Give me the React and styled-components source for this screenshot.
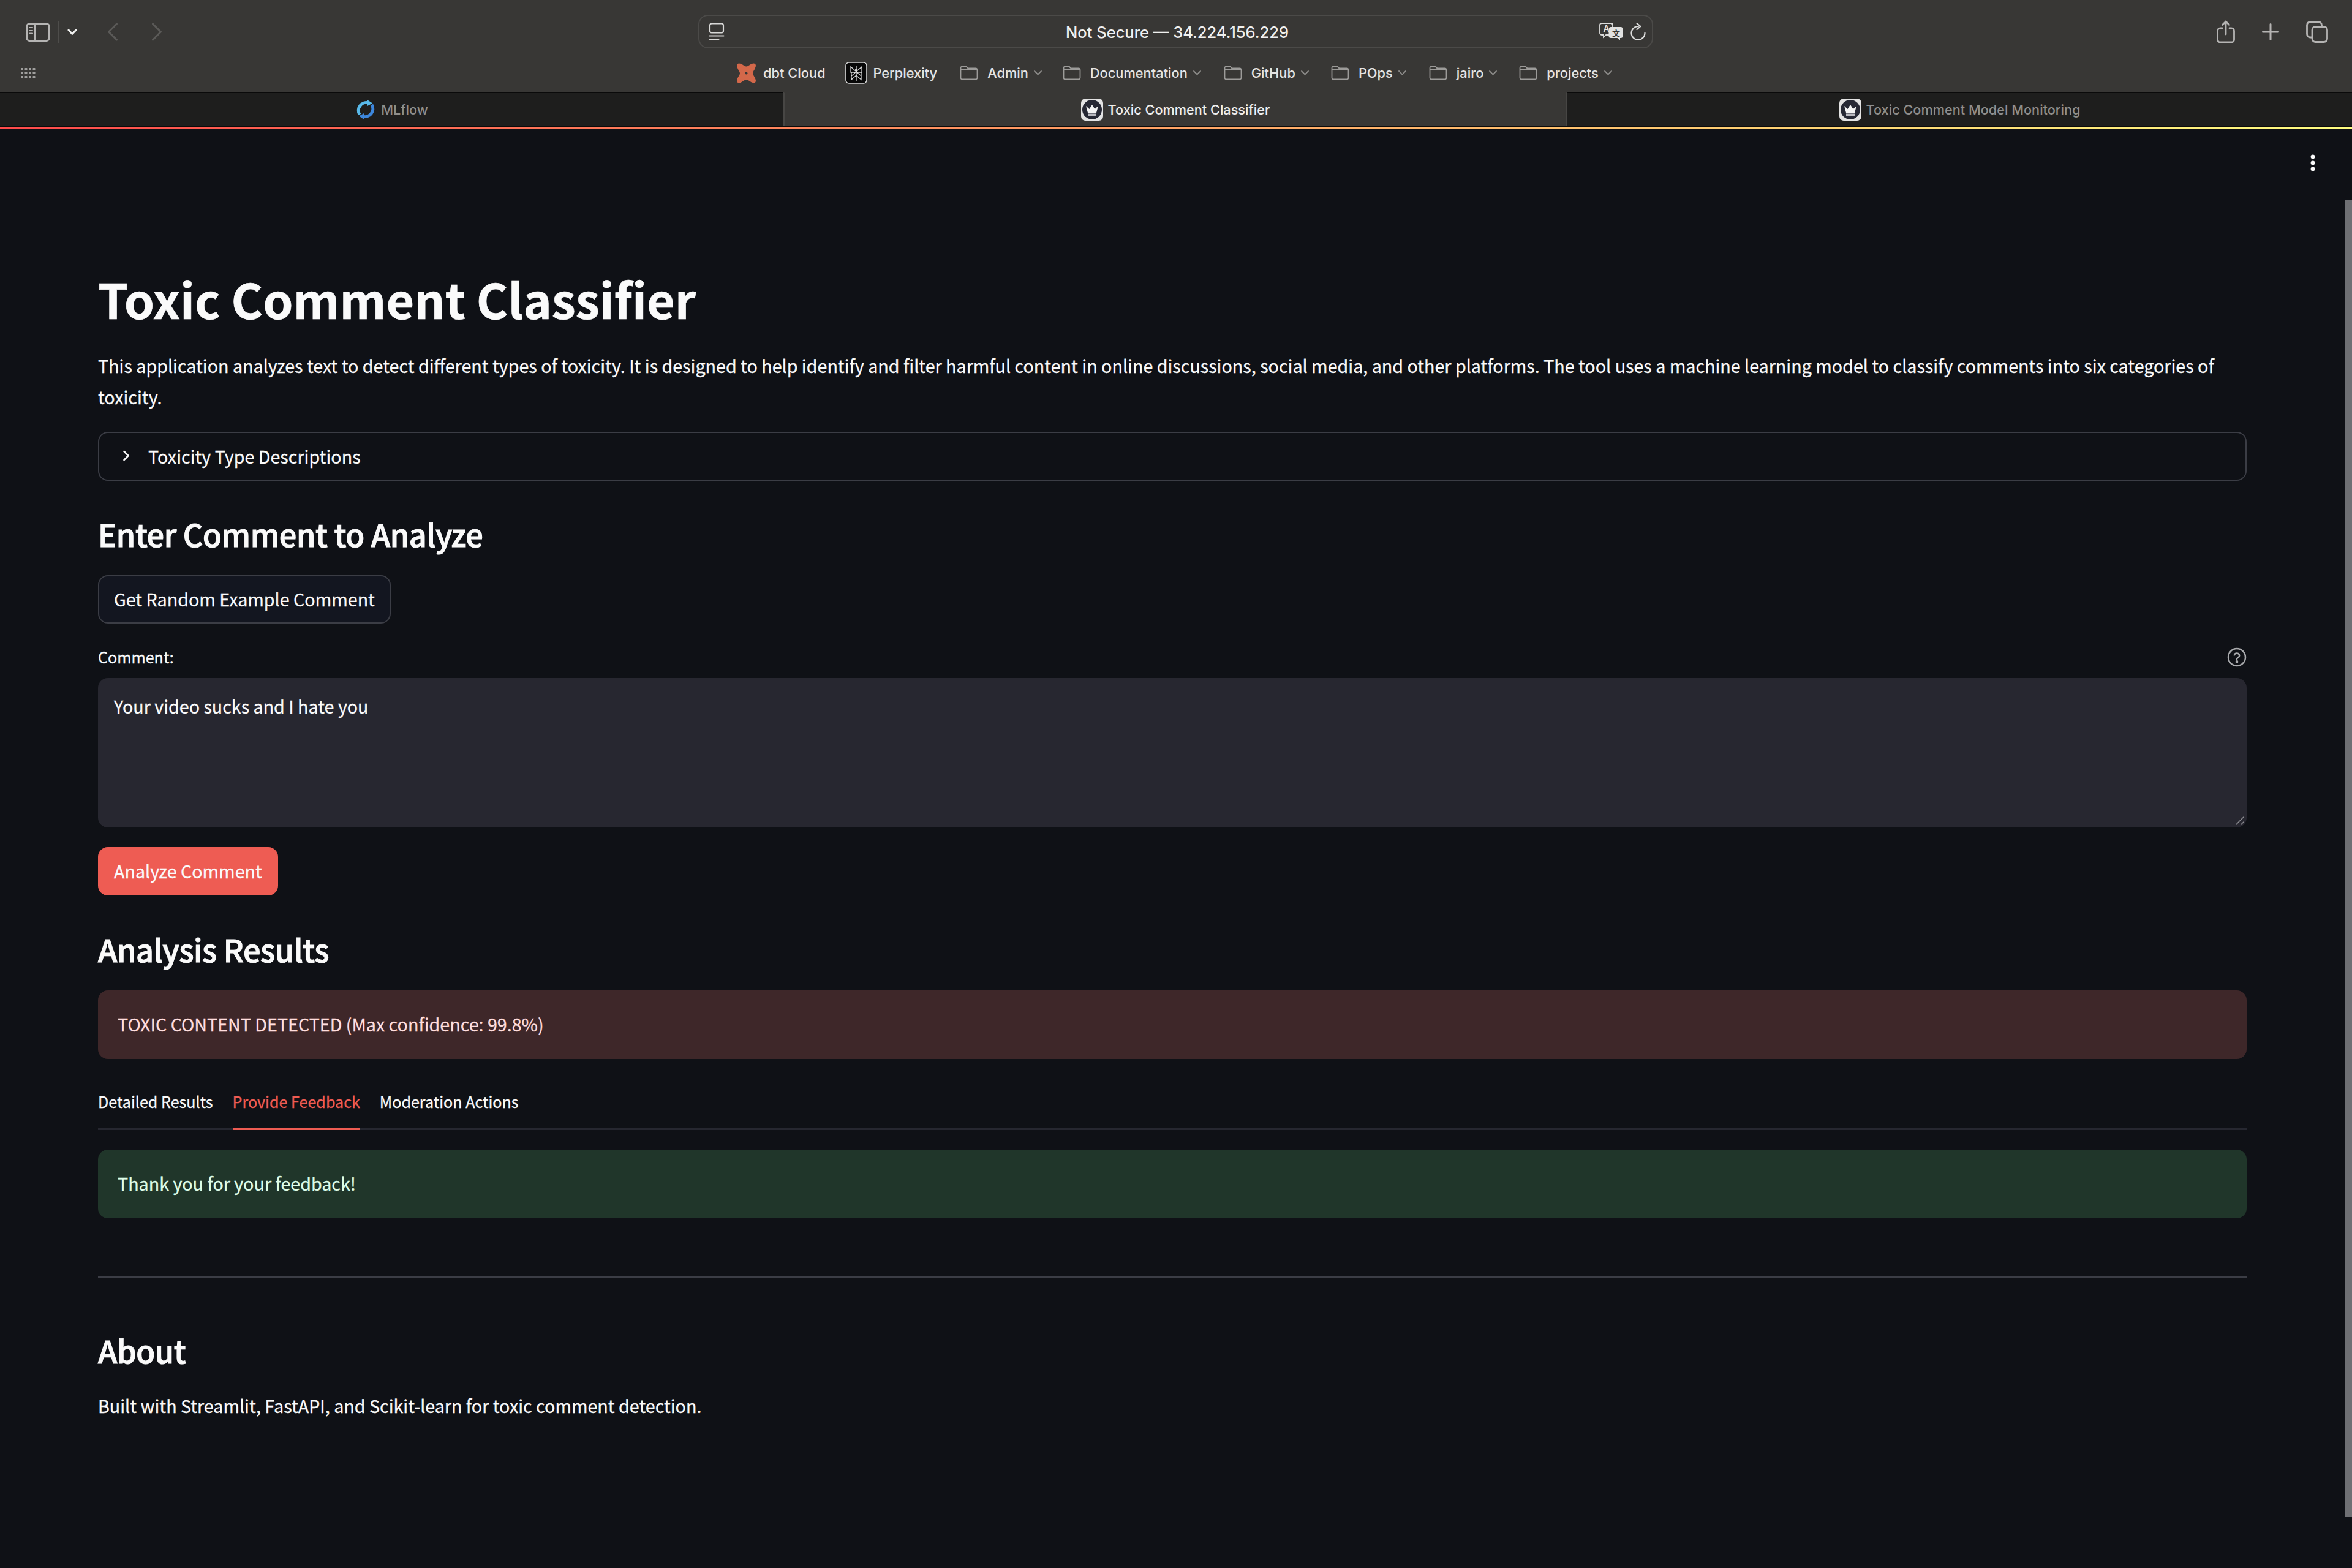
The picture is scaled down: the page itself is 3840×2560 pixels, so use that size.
import React from "react";
import styled, { createGlobalStyle } from "styled-components";

const Global = createGlobalStyle`
  html, body { margin: 0; padding: 0; background: #0f1116; }
  * { box-sizing: border-box; }
`;
const CHROME = `Inter, "Liberation Sans", sans-serif`;
const BODY = `"Noto Sans CJK SC", "Noto Sans", sans-serif`;

const Page = styled.div`
  width: 3840px; height: 2560px; display: flex; flex-direction: column;
  background: #0f1116; overflow: hidden;
`;
const Toolbar = styled.header`
  height: 150px; background: #383735; display: flex; flex-direction: column; flex: none;
`;
const TopRow = styled.div`
  height: 88px; padding-top: 24px; display: grid; grid-template-columns: 1140px 1559px 1fr;
`;
const NavGroup = styled.div`
  height: 56px; padding-left: 42px; display: flex; align-items: center;
`;
const ActionGroup = styled.div`
  height: 56px; padding-right: 39px; display: flex; align-items: center; justify-content: flex-end; gap: 44px;
`;
const VDivider = styled.span`
  width: 2px; height: 36px; background: #4e4d4b; margin: 0 13px 0 13px; flex: none;
`;
const NavSpacer = styled.span`
  width: ${p => p.$w}px; flex: none;
`;
const Address = styled.div`
  height: 55px; border: 2px solid #4b4a48; border-radius: 16px;
  display: grid; grid-template-columns: 1fr auto 1fr; align-items: center;
  padding: 0 10px 0 15px; color: #f0f0ef; font: 500 25.5px ${CHROME};
`;
const AddressLabel = styled.span`
  padding-top: 2px;
`;
const AddressEnd = styled.div`
  display: flex; align-items: center; gap: 12px; justify-content: flex-end;
`;
const BookmarkRow = styled.nav`
  height: 62px; display: flex; align-items: center; padding-left: 33px;
`;
const Bookmarks = styled.div`
  display: flex; align-items: center; margin-left: 1144px; font: 500 21.8px ${CHROME}; color: #e4e3e2;
`;
const Bookmark = styled.div`
  display: flex; align-items: center; gap: ${p => p.$gap}px; margin-right: ${p => p.$after}px; white-space: nowrap; height: 38px;
`;
const Tabs = styled.div`
  height: 56px; display: grid; grid-template-columns: 1279px 1280px 1fr; flex: none; background: #1e1e1d;
`;
const Tab = styled.div`
  display: flex; align-items: center; justify-content: center; gap: 8px;
  font: 500 21.7px ${CHROME}; white-space: nowrap;
  background: ${p => p.$active ? "#383735" : "#1e1e1d"};
  color: ${p => p.$active ? "#eeeeed" : "#8f8e8c"};
  border-top: 2px solid ${p => p.$active ? "#383735" : "#0a0a0a"};
  border-left: ${p => p.$active ? "2px solid #474644" : "none"};
  border-right: ${p => p.$active ? "2px solid #474644" : "none"};
`;
const Decoration = styled.div`
  height: 4px; flex: none; border-top: 1px solid #0b0b0b;
  background: linear-gradient(90deg, rgb(255,75,75), rgb(255,253,128));
`;
const Main = styled.main`
  flex: 1; padding: 229px 172px 0 160px; font-family: ${BODY}; color: #fafafa; position: relative;
  -webkit-text-stroke: 0.3px currentColor;
`;
const Kebab = styled.svg`
  position: absolute; left: 3770px; top: 40px; width: 12px; height: 32px; fill: #fafafa;
`;
const Scrollbar = styled.div`
  position: absolute; right: 0; top: 116px; width: 12px; height: 2150px; background: #6f7074;
`;
const Title = styled.h1`
  margin: 0; font-size: 78.8px; line-height: 96px; font-weight: 700; -webkit-text-stroke: 0.7px currentColor;
`;
const Paragraph = styled.p`
  margin: ${p => p.$top}px 0 0; font-size: 28.66px; line-height: 51.2px; font-weight: 400;
`;
const Expander = styled.div`
  margin-top: 32px; height: 80px; border: 2px solid #3b3d45; border-radius: 16px; padding-bottom: 2px;
  display: flex; align-items: center; padding-left: 38px; gap: 30px; font-size: 28.66px;
`;
const Subheader = styled.h3`
  margin: ${p => p.$top}px 0 0; font-size: 50.4px; line-height: 72px; font-weight: 500;
  letter-spacing: -0.4px; -webkit-text-stroke: 1.1px currentColor;
`;
const Button = styled.button`
  display: flex; align-items: center; height: 79px; padding: 0 24px 3px; margin-top: ${p => p.$top}px;
  font: 400 28.66px ${BODY}; color: #fafafa; border-radius: 16px; -webkit-text-stroke: 0.3px currentColor;
  background: ${p => p.$primary ? "#ee5c53" : "#131620"};
  border: 2px solid ${p => p.$primary ? "#ee5c53" : "#3b3d45"};
`;
const LabelRow = styled.div`
  margin-top: 33px; height: 40px; display: flex; align-items: center; justify-content: space-between;
  font-size: 25.1px; padding-top: 2px;
`;
const TextArea = styled.div`
  margin-top: 16px; height: 244px; background: #272730; border-radius: 16px; padding: 20px 26px;
  font-size: 28.66px; line-height: 51px; position: relative;
`;
const Alert = styled.div`
  margin-top: ${p => p.$top}px; height: 112px; border-radius: 16px; padding: 0 32px 4px; display: flex; align-items: center;
  font-size: 28.66px; background: ${p => p.$tone === "error" ? "#3e2729" : "#20362a"};
  color: ${p => p.$tone === "error" ? "#ffdede" : "#dffde9"};
`;
const TabBar = styled.div`
  margin-top: 50px; height: 66px; display: flex; gap: 32px; border-bottom: 4px solid #262730;
`;
const TabItem = styled.div`
  font-size: 25.1px; line-height: 38px; height: 66px;
  color: ${p => p.$active ? "#ee5c53" : "#fafafa"};
  border-bottom: 4px solid ${p => p.$active ? "#ee5c53" : "transparent"};
`;
const Divider = styled.hr`
  margin: 95px 0 0; height: 2px; border: 0; background: #3b3d45;
`;

const Icon = styled.svg`
  flex: none; color: ${p => p.$c || "#b5b4b3"}; fill: none; stroke: currentColor;
  stroke-linecap: round; stroke-linejoin: round; stroke-width: ${p => p.$sw || 3};
`;
const Filled = styled.svg`
  flex: none; display: block;
`;
const ResizeHandle = styled(Icon)`
  position: absolute; right: 3px; bottom: 3px;
`;
const HelpGlyph = styled(Icon)`
  margin-top: 2px;
`;
const BookmarkChevron = styled(Icon)`
  margin-left: -7px;
`;

const SidebarIcon = () => (
  <Icon width="40" height="31" viewBox="0 0 40 31">
    <rect x="1.500" y="1.500" width="37" height="28" rx="5" /><path d="M15 2v27" />
    <path d="M6 8h5M6 13h5M6 17.500h5" strokeWidth="2.200" />
  </Icon>
);
const NavChevron = ({ d }) => (
  <Icon $c="#5b5a58" width="18" height="30" viewBox="0 0 18 30"><path d={d} /></Icon>
);
const DropDown = () => (
  <Icon $c="#f0f0ef" width="16" height="11" viewBox="0 0 16 11"><path d="m2 2 6 6.500L14 2" /></Icon>
);
const PageIcon = () => (
  <Icon $c="#d8d8d7" $sw="2.200" width="26" height="30" viewBox="0 0 26 30">
    <rect x="2" y="1.500" width="22" height="15" rx="3" /><path d="M1.500 21.500h23M1.500 28h15" />
  </Icon>
);
const TranslateIcon = () => (
  <Filled width="39" height="29" viewBox="0 0 39 29">
    <path d="M4 1h15a3 3 0 0 1 3 3v13a3 3 0 0 1-3 3H11l-4 3.500V20H4a3 3 0 0 1-3-3V4a3 3 0 0 1 3-3Z" fill="none" stroke="#dcdcdb" strokeWidth="1.800" />
    <text x="6.500" y="15" fontSize="14" fontFamily="Inter, sans-serif" fontWeight="600" fill="#e4e4e3">A</text>
    <path d="M19 7h16a3.500 3.500 0 0 1 3.500 3.500v11A3.500 3.500 0 0 1 35 25h-1v3.500L29.500 25H19a3.500 3.500 0 0 1-3.500-3.500v-11A3.500 3.500 0 0 1 19 7Z" fill="#e2e2e1" />
    <text x="21" y="22" fontSize="13" fontFamily="Noto Sans CJK SC, sans-serif" fontWeight="700" fill="#383735">文</text>
  </Filled>
);
const ReloadIcon = () => (
  <Icon $c="#dcdcdb" $sw="2.200" width="25" height="29" viewBox="0 0 25 29">
    <path d="M13 6A11 11 0 1 0 23.500 16.500" /><path d="m10.500 1 6 5-6 5" />
  </Icon>
);
const ShareIcon = () => (
  <Icon $sw="2.800" width="30" height="38" viewBox="0 0 30 38">
    <path d="M9 13H6a4.500 4.500 0 0 0-4.500 4.500v14A4.500 4.500 0 0 0 6 36h18a4.500 4.500 0 0 0 4.500-4.500v-14A4.500 4.500 0 0 0 24 13h-3M15 2v21M9.500 7.500 15 2l5.500 5.500" />
  </Icon>
);
const PlusIcon = () => (
  <Icon width="28" height="28" viewBox="0 0 28 28"><path d="M14 1.500v25M1.500 14h25" /></Icon>
);
const TabsIcon = () => (
  <Icon $sw="2.800" width="36" height="36" viewBox="0 0 36 36">
    <path d="M9 27H7a5.500 5.500 0 0 1-5.500-5.500V7A5.500 5.500 0 0 1 7 1.500h13A5.500 5.500 0 0 1 25.500 7v2" />
    <rect x="10" y="9.500" width="24.500" height="25" rx="5.500" />
  </Icon>
);
const GridIcon = () => (
  <Filled width="25" height="18" viewBox="0 0 25 18" fill="#a09f9e">
    {[1, 7.500, 14].flatMap(y => [1, 7.500, 14, 20.500].map(x => <rect key={x + "-" + y} x={x} y={y} width="4" height="3.500" rx=".8" />))}
  </Filled>
);
const DbtIcon = () => (
  <Filled width="33" height="33" viewBox="0 0 33 33">
    <path fill="#d3684a" d="M2 1.500C4-.5 7 .5 9.500 2c2.500 1.500 5 3.500 7 3.500s4.500-2 7-3.500C26 .5 29-.5 31 1.500c2 2 .5 5-.5 7.500-1 2.500-3.500 5-3.500 7.500s2.500 5 3.500 7.500c1 2.500 2.500 5.500.5 7.500s-5 .5-7.500-1c-2.500-1.500-5-3.500-7-3.500s-4.500 2-7 3.500C7 32.500 4 33.500 2 31.500s-.5-5 .5-7.500c1-2.500 3.500-5 3.500-7.500S3.500 11.500 2.500 9 0 3.500 2 1.500Z" />
    <circle cx="16.500" cy="16.500" r="2" fill="#383735" />
  </Filled>
);
const PerplexityIcon = () => (
  <Filled width="36" height="36" viewBox="0 0 36 36">
    <rect x="1" y="1" width="34" height="34" rx="5" fill="#080808" stroke="#d8d8d8" strokeWidth="1.600" />
    <path d="M18 6v25M9 8l9 8 9-8v9H9V8ZM18 16l-8 7v6l8-7 8 7v-6l-8-7ZM10 17v6M26 17v6" fill="none" stroke="#d9d9d9" strokeWidth="1.300" />
    <circle cx="18" cy="13" r="2" fill="#d9d9d9" />
  </Filled>
);
const FolderIcon = () => (
  <Icon $c="#9c9b99" $sw="1.800" width="30" height="24" viewBox="0 0 30 24">
    <path d="M1.500 7V4A2.500 2.500 0 0 1 4 1.500h6.500l3 3H26A2.500 2.500 0 0 1 28.500 7v13a2.500 2.500 0 0 1-2.500 2.500H4A2.500 2.500 0 0 1 1.500 20V7h27" />
  </Icon>
);
const MiniChevron = () => (
  <BookmarkChevron $c="#8e8d8b" $sw="1.800" width="15" height="10" viewBox="0 0 15 10"><path d="m2 2 5.500 5.500L13 2" /></BookmarkChevron>
);
const MlflowIcon = () => (
  <Filled width="34" height="34" viewBox="0 0 34 34" fill="none">
    <path d="M22 6A13 13 0 0 0 7 25" stroke="#58b9e9" strokeWidth="5" />
    <path d="M12 28A13 13 0 0 0 27 9" stroke="#3d87dc" strokeWidth="5" />
    <path d="M19 .500l9 6-9 5Z" fill="#58b9e9" />
    <path d="M15 33.500l-9-6 9-5Z" fill="#3d87dc" />
  </Filled>
);
const CrownIcon = () => (
  <Filled width="36" height="36" viewBox="0 0 36 36">
    <rect width="36" height="36" rx="7" fill="#e3e3e3" />
    <circle cx="18" cy="18" r="16" fill="#262834" />
    <path d="M8 12l5.500 5 4.500-7 4.500 7 5.500-5-3 11H11Z" fill="#f4f4f4" />
    <rect x="11" y="24.500" width="14" height="3.500" fill="#b9b9bf" />
  </Filled>
);
const ExpandChevron = () => (
  <Icon $c="#fafafa" $sw="2.600" width="12" height="18" viewBox="0 0 12 18"><path d="m2.500 2 7 7-7 7" /></Icon>
);
const HelpIcon = () => (
  <HelpGlyph $c="#a9aaad" $sw="2.500" width="32" height="32" viewBox="0 0 32 32">
    <circle cx="16" cy="16" r="14" />
    <path d="M11.800 12.500a4.300 4.300 0 0 1 8.400 1c0 2.800-4.200 3.300-4.200 5.500" />
    <circle cx="16" cy="23.500" r="1.200" fill="currentColor" />
  </HelpGlyph>
);

const folders = [
  ["Admin", 33], ["Documentation", 36], ["GitHub", 35], ["POps", 36], ["jairo", 35], ["projects", 0],
];

export default function App() {
  return (
    <Page>
      <Global />
      <Toolbar>
        <TopRow>
          <NavGroup>
            <SidebarIcon />
            <VDivider />
            <DropDown />
            <NavSpacer $w={49} />
            <NavChevron d="M15.500 2 2.500 15l13 13" />
            <NavSpacer $w={54} />
            <NavChevron d="M2.500 2l13 13-13 13" />
          </NavGroup>
          <Address>
            <PageIcon />
            <AddressLabel>Not Secure — 34.224.156.229</AddressLabel>
            <AddressEnd><TranslateIcon /><ReloadIcon /></AddressEnd>
          </Address>
          <ActionGroup><ShareIcon /><PlusIcon /><TabsIcon /></ActionGroup>
        </TopRow>
        <BookmarkRow>
          <GridIcon />
          <Bookmarks>
            <Bookmark $gap={11} $after={33}><DbtIcon /><span>dbt Cloud</span></Bookmark>
            <Bookmark $gap={9} $after={37}><PerplexityIcon /><span>Perplexity</span></Bookmark>
            {folders.map(([name, after]) => (
              <Bookmark key={name} $gap={15} $after={after}>
                <FolderIcon /><span>{name}</span><MiniChevron />
              </Bookmark>
            ))}
          </Bookmarks>
        </BookmarkRow>
      </Toolbar>
      <Tabs>
        <Tab><MlflowIcon />MLflow</Tab>
        <Tab $active><CrownIcon />Toxic Comment Classifier</Tab>
        <Tab><CrownIcon />Toxic Comment Model Monitoring</Tab>
      </Tabs>
      <Decoration />
      <Main>
        <Kebab viewBox="0 0 12 32">
          <circle cx="6" cy="6" r="3.400" /><circle cx="6" cy="16" r="3.400" /><circle cx="6" cy="26" r="3.400" />
        </Kebab>
        <Scrollbar />
        <Title>Toxic Comment Classifier</Title>
        <Paragraph $top={36}>
          This application analyzes text to detect different types of toxicity. It is designed to help identify and filter harmful content in online discussions, social media, and other platforms. The tool uses a machine learning model to classify comments into six categories of toxicity.
        </Paragraph>
        <Expander><ExpandChevron /><span>Toxicity Type Descriptions</span></Expander>
        <Subheader $top={51}>Enter Comment to Analyze</Subheader>
        <Button $top={31}>Get Random Example Comment</Button>
        <LabelRow><span>Comment:</span><HelpIcon /></LabelRow>
        <TextArea>
          Your video sucks and I hate you
          <ResizeHandle $c="#8d8d92" $sw="1.600" width="16" height="16" viewBox="0 0 16 16"><path d="M2 14 14 2M10 14l4-4" /></ResizeHandle>
        </TextArea>
        <Button $primary $top={32}>Analyze Comment</Button>
        <Subheader $top={52}>Analysis Results</Subheader>
        <Alert $tone="error" $top={31}>TOXIC CONTENT DETECTED (Max confidence: 99.8%)</Alert>
        <TabBar>
          <TabItem>Detailed Results</TabItem>
          <TabItem $active>Provide Feedback</TabItem>
          <TabItem>Moderation Actions</TabItem>
        </TabBar>
        <Alert $tone="success" $top={32}>Thank you for your feedback!</Alert>
        <Divider />
        <Subheader $top={83}>About</Subheader>
        <Paragraph $top={28}>Built with Streamlit, FastAPI, and Scikit-learn for toxic comment detection.</Paragraph>
      </Main>
    </Page>
  );
}
